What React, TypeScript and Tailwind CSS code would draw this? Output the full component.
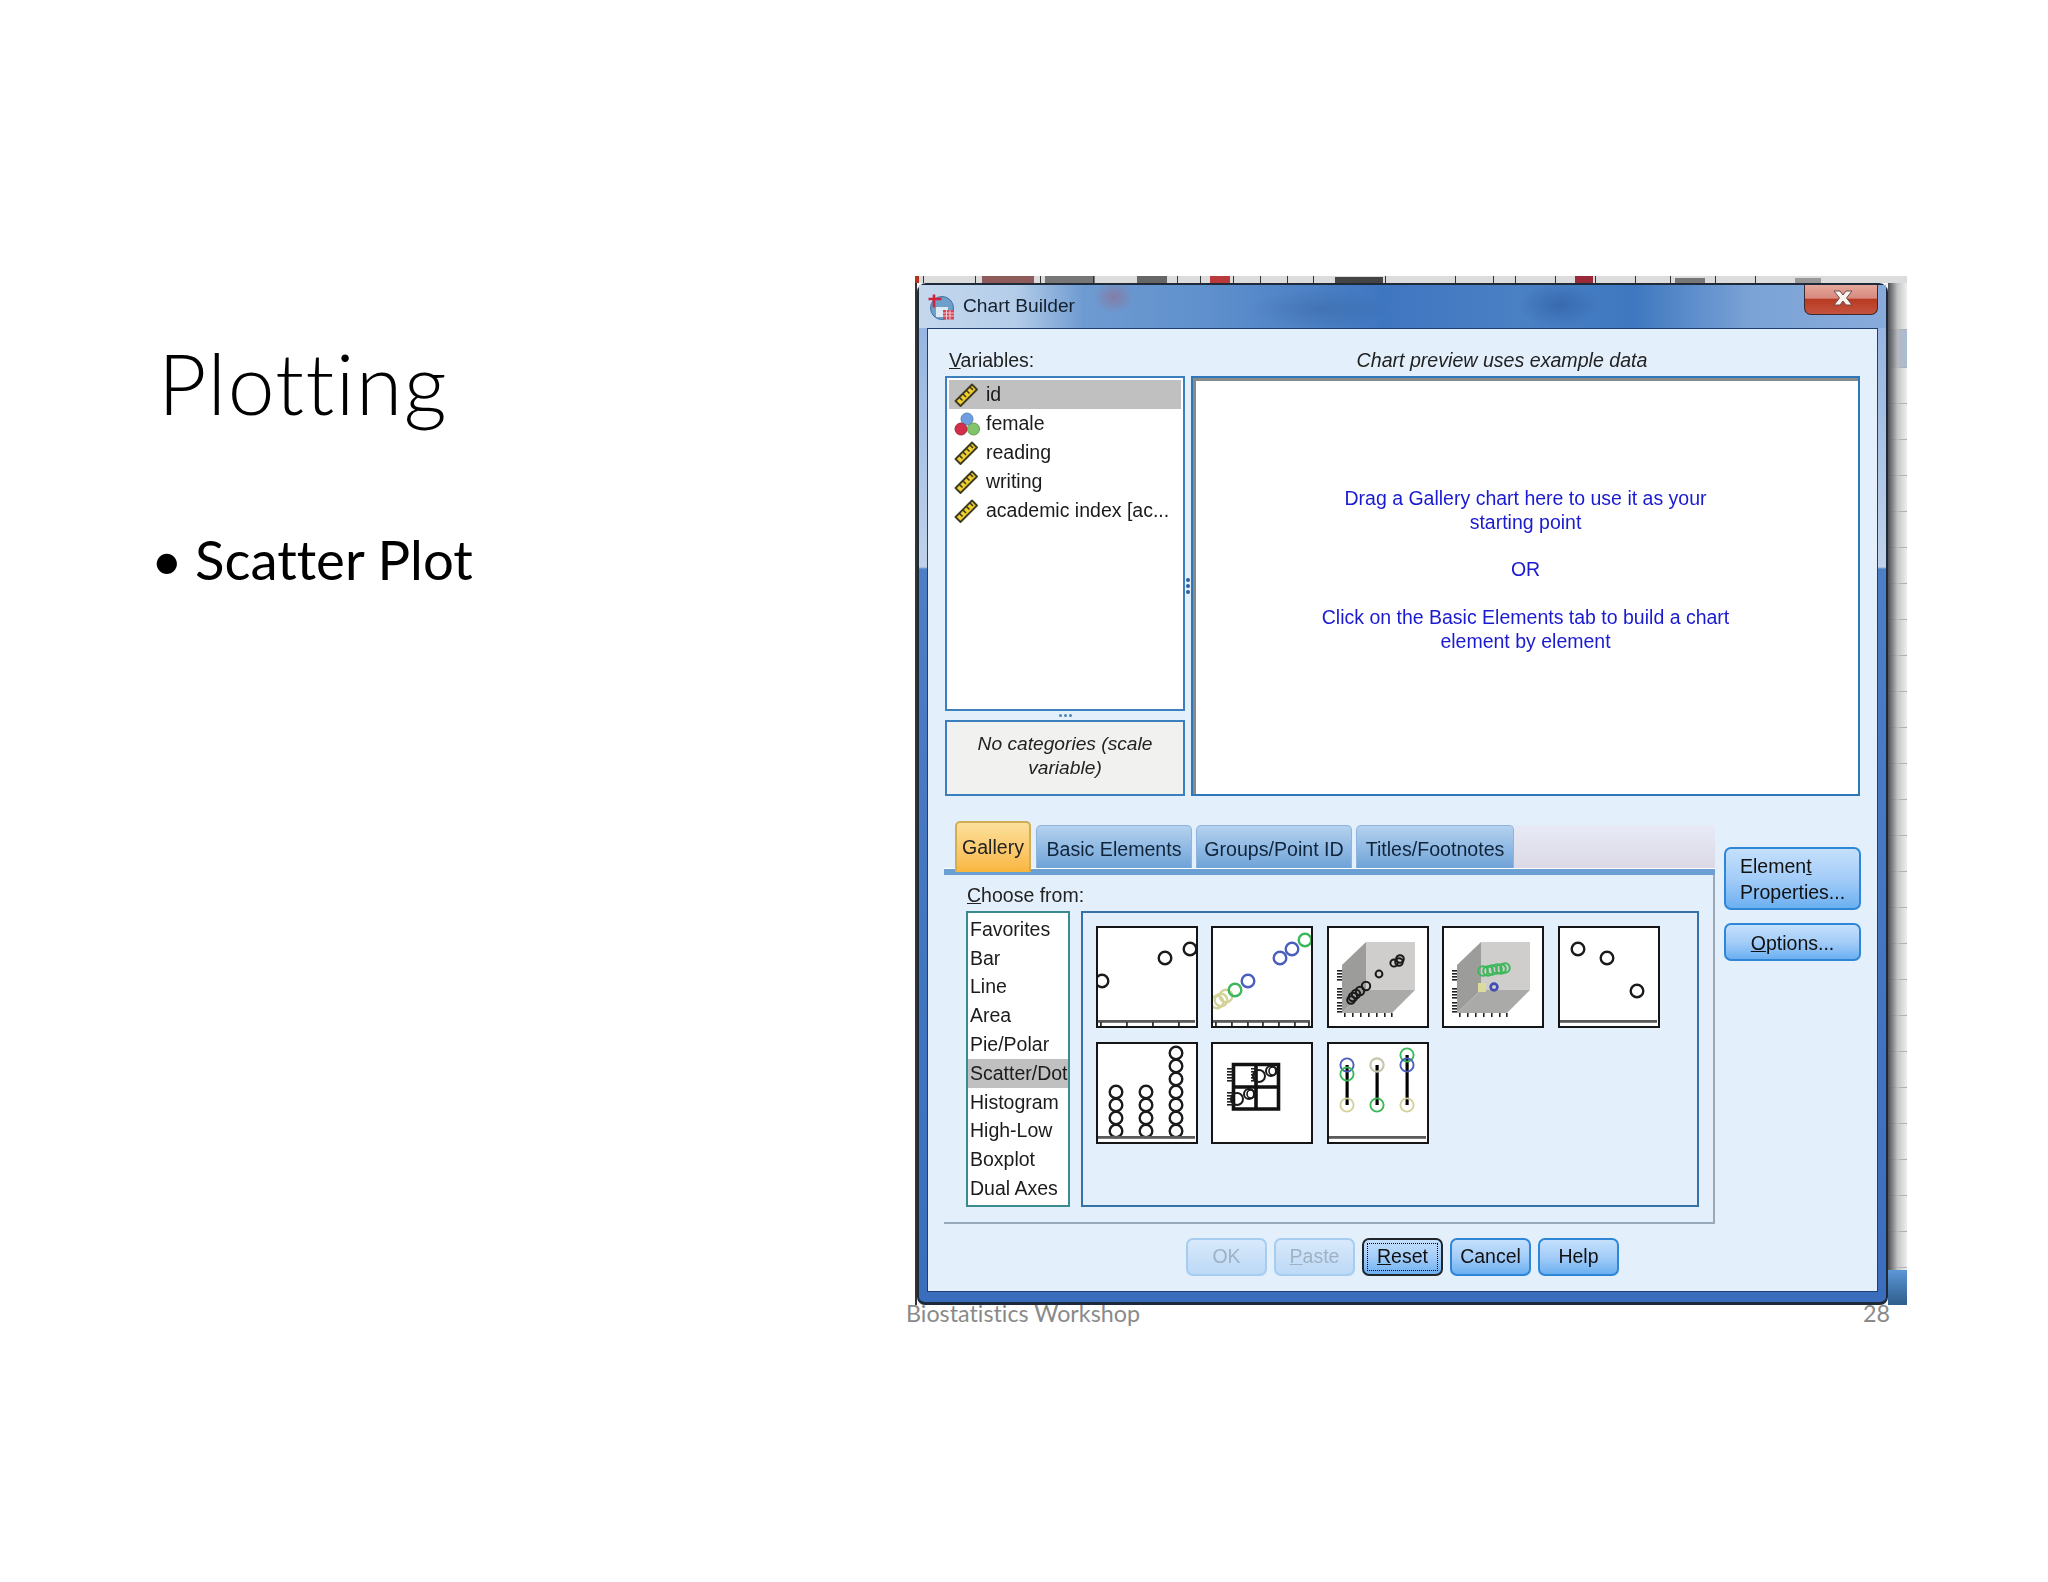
import type { ReactNode } from 'react';

const variables = [
  { name: 'id', kind: 'scale', selected: true },
  { name: 'female', kind: 'nominal' },
  { name: 'reading', kind: 'scale' },
  { name: 'writing', kind: 'scale' },
  { name: 'academic index [ac...', kind: 'scale' },
];

const categories = ['Favorites', 'Bar', 'Line', 'Area', 'Pie/Polar', 'Scatter/Dot', 'Histogram', 'High-Low', 'Boxplot', 'Dual Axes'];

const INK = '#1a1a1a';
const GREEN = '#3cb85a';
const BLUE = '#4a5fbd';
const KHAKI = '#d3d29b';

function Ruler() {
  return (
    <svg viewBox="0 0 24 24" className="w-[24px] h-[24px]">
      <path d="M1.5 18 L18 1.5 L23 6.5 L6.5 23 Z" fill="#f0cf2a" stroke="#3d3a22" strokeWidth="1.8" strokeLinejoin="round" />
      <path d="M5.5 14.5 L8.5 17.5 M9 11 L12 14 M12.5 7.5 L15.5 10.5 M16 4 L19 7" stroke="#3d3a22" strokeWidth="1.6" />
    </svg>
  );
}

function Balls() {
  return (
    <svg viewBox="0 0 26 24" className="w-[26px] h-[24px]">
      <circle cx="13" cy="7" r="6" fill="#6f9ee0" stroke="#5a83bf" />
      <circle cx="7" cy="17" r="6" fill="#d2304a" stroke="#a82538" />
      <circle cx="19.5" cy="17" r="6" fill="#82c46c" stroke="#639c52" />
    </svg>
  );
}

function AppIcon() {
  return (
    <svg viewBox="0 0 27 26" className="w-[27px] h-[26px]">
      <circle cx="14" cy="14" r="11.5" fill="#6d9fcb" stroke="#42719e" />
      <path d="M8 13h12v10H8z" fill="#dbe9f4" />
      <path d="M6 0.5v13M0.5 5h13" stroke="#d3203c" strokeWidth="2.6" />
      <path d="M15 16h11v9.5H15z" fill="#d3445a" />
      <path d="M15 19h11M15 22h11M18.5 16v9.5M22 16v9.5" stroke="#f6d8dc" strokeWidth="0.9" />
    </svg>
  );
}

function CloseGlyph() {
  return (
    <svg viewBox="0 0 20 16" className="w-[20px] h-[16px]">
      <path d="M1 1H7L10 5L13 1H19L13.5 8L19 15H13L10 11L7 15H1L6.5 8Z" fill="#f6f3f0" stroke="#6e4a46" strokeWidth="1" strokeLinejoin="round" />
    </svg>
  );
}

function Ring({ x, y, c = INK, r = 6.3, w = 2.4 }: { x: number; y: number; c?: string; r?: number; w?: number }) {
  return <circle cx={x} cy={y} r={r} fill="none" stroke={c} strokeWidth={w} />;
}

function Axis({ ticks = [] as number[] }) {
  return (
    <>
      <rect x="2" y="94" width="97" height="2.8" fill="#5a5a5a" />
      {ticks.map((t) => (
        <rect key={t} x={t} y="96" width="1.8" height="4" fill="#333" />
      ))}
    </>
  );
}

function Cube({ children }: { children: ReactNode }) {
  const ticks = [44, 47, 50, 53, 62, 65, 68, 71, 76, 79, 82, 85];
  return (
    <>
      <path d="M39 16H88V64H39Z" fill="#cfcecc" />
      <path d="M15 39L39 16V64L15 87Z" fill="#9c9c9a" />
      <path d="M15 87L39 64H88L65 87Z" fill="#aaaaa8" />
      {ticks.map((y) => (
        <rect key={y} x="10" y={y} width="5" height="1.6" fill="#222" />
      ))}
      {[17, 25, 33, 41, 49, 57, 64].map((x) => (
        <rect key={x} x={x} y="87" width="1.6" height="4" fill="#222" />
      ))}
      {children}
    </>
  );
}

const thumbs: ReactNode[] = [
  <>
    <Ring x={6} y={55} />
    <Ring x={69} y={32} />
    <Ring x={94} y={23} />
    <Axis ticks={[4, 30, 56, 82]} />
  </>,
  <>
    <Ring x={6} y={76} c={KHAKI} />
    <Ring x={10} y={74} c={KHAKI} />
    <Ring x={15} y={70} c={KHAKI} />
    <Ring x={24} y={64} c={GREEN} />
    <Ring x={37} y={55} c={BLUE} />
    <Ring x={69} y={32} c={BLUE} />
    <Ring x={81} y={23} c={BLUE} />
    <Ring x={94} y={14} c={GREEN} />
    <Axis ticks={[4, 20, 36, 51, 67, 83, 97]} />
  </>,
  <Cube>
    <Ring x={73} y={33} r={3.8} w={2} />
    <Ring x={72} y={36} r={3.8} w={2} />
    <Ring x={67} y={37} r={3.6} w={2} />
    <Ring x={52} y={48} r={3.4} w={2} />
    <Ring x={39} y={60} r={4.2} w={2} />
    <Ring x={33} y={65} r={4.2} w={2} />
    <Ring x={29} y={68} r={4.2} w={2} />
    <Ring x={26} y={71} r={4.2} w={2} />
    <Ring x={24} y={74} r={3.8} w={2} />
  </Cube>,
  <Cube>
    <Ring x={41} y={45} r={4.8} c={GREEN} w={2} />
    <Ring x={46} y={45} r={4.8} c={GREEN} w={2} />
    <Ring x={50} y={44} r={4.8} c={GREEN} w={2} />
    <Ring x={55} y={43} r={4.8} c={GREEN} w={2} />
    <Ring x={59} y={43} r={4.8} c={GREEN} w={2} />
    <Ring x={63} y={42} r={4.8} c={GREEN} w={2} />
    <rect x="36" y="57" width="8" height="9" fill="#dcdb9e" />
    <Ring x={52} y={61} r={3.4} c="#3f4db5" w={2.6} />
  </Cube>,
  <>
    <Ring x={20} y={23} />
    <Ring x={49} y={32} />
    <Ring x={79} y={65} />
    <Axis />
  </>,
  <>
    {[89, 76, 63, 50].map((y) => (
      <Ring key={`a${y}`} x={20} y={y} />
    ))}
    {[89, 76, 63, 50].map((y) => (
      <Ring key={`b${y}`} x={50} y={y} />
    ))}
    {[89, 76, 63, 50, 37, 24, 11].map((y) => (
      <Ring key={`c${y}`} x={80} y={y} />
    ))}
    <Axis />
  </>,
  <>
    <path d="M22.5 22.5H67.5V67H22.5Z M45 22.5V67 M22.5 45H67.5" fill="#fff" stroke="#111" strokeWidth="3.6" />
    {[26, 29, 32, 35, 38, 50, 53, 56, 59, 62].map((y) => (
      <rect key={y} x="16" y={y} width="6" height="1.6" fill="#222" />
    ))}
    {[26, 29, 32, 35, 38].map((y) => (
      <rect key={`m${y}`} x="40" y={y} width="5" height="1.6" fill="#222" />
    ))}
    <Ring x={48} y={34} r={6} w={2} />
    <Ring x={60} y={29} r={5} w={2} />
    <Ring x={62} y={29} r={4} w={1.6} />
    <Ring x={26} y={57} r={6} w={2} />
    <Ring x={38} y={52} r={5} w={2} />
    <Ring x={40} y={52} r={4} w={1.6} />
  </>,
  <>
    <rect x="18" y="23" width="4" height="40" fill="#888" />
    <rect x="19" y="23" width="2.4" height="40" fill="#000" />
    <rect x="48.5" y="23" width="3.2" height="40" fill="#000" />
    <rect x="78" y="13" width="4" height="50" fill="#888" />
    <rect x="79" y="13" width="2.4" height="50" fill="#000" />
    <Ring x={20} y={23} r={6.6} c={BLUE} w={1.9} />
    <Ring x={20} y={32} r={6.6} c={GREEN} w={1.9} />
    <Ring x={20} y={63} r={6.6} c={KHAKI} w={1.9} />
    <Ring x={50} y={23} r={6.6} c="#c8c6ae" w={2.2} />
    <Ring x={50} y={63} r={6.6} c={GREEN} w={1.9} />
    <Ring x={80} y={13} r={6.6} c={GREEN} w={1.9} />
    <Ring x={80} y={23} r={6.6} c={BLUE} w={1.9} />
    <Ring x={80} y={63} r={6.6} c={KHAKI} w={1.9} />
    <Axis />
  </>,
];

function Thumb({ children }: { children: ReactNode }) {
  return (
    <div className="w-[102px] h-[102px] bg-white border-2 border-[#151515]">
      <svg viewBox="2 2 98 98" className="w-full h-full block">
        {children}
      </svg>
    </div>
  );
}

function Tab({ label, w }: { label: string; w: string }) {
  return (
    <div className={`${w} h-[43px] flex items-center justify-center pt-[6px] rounded-t-[5px] border-t border-x border-[#8fb4dc] bg-gradient-to-b from-[#b4d2ef] to-[#6fa3d8] text-[19.6px] text-[#10243a]`}>
      {label}
    </div>
  );
}

const blueBtn = 'rounded-[7px] border-2 border-[#2f86d6] bg-gradient-to-b from-[#c4e0fc] via-[#a4cdf8] to-[#6bb0f1] text-[19.5px] text-[#111]';
const offBtn = 'rounded-[7px] border-2 border-[#a6cdef] bg-gradient-to-b from-[#d8e9fb] to-[#bcd9f6] text-[19.5px] text-[#9fb2c4]';

function Chrome() {
  return (
    <div className="w-[971px] h-[1022px] flex flex-col rounded-t-[9px] rounded-b-[8px] border-t-2 border-x-2 border-b-[3px] border-[#1e2a3a] bg-[linear-gradient(180deg,#8fb0df_0px,#c0d2ea_282px,#4d7fc6_284px,#3a6dbc_100%)]">
      <div className="h-[43px] shrink-0 flex justify-between pl-[9px] pr-[8px] bg-[radial-gradient(ellipse_40px_22px_at_640px_20px,rgba(30,70,140,0.35),transparent),radial-gradient(ellipse_70px_20px_at_400px_24px,rgba(40,80,130,0.25),transparent),radial-gradient(ellipse_20px_16px_at_195px_12px,rgba(190,60,70,0.3),transparent),linear-gradient(90deg,#c5d8ee_0%,#b4cde9_10%,#6e9bd1_17%,#5f90cd_30%,#3f76c0_48%,#4a80c4_62%,#3f78c0_74%,#7ba3d6_86%,#88abdb_100%)]">
        <div className="flex items-center gap-[8px]">
          <AppIcon />
          <span className="text-[19.2px] text-[#14202e]">Chart Builder</span>
        </div>
        <div className="w-[74px] h-[30px] flex items-center justify-center pl-[3px] pb-[3px] rounded-b-[7px] border-x border-b border-[#3b2a30] bg-[linear-gradient(180deg,#e6a79c_0%,#d78a7e_45%,#b93a22_50%,#c4533f_100%)]">
          <CloseGlyph />
        </div>
      </div>
      <div className="flex-1 px-[8px] pb-[7px]">
        <DialogBody />
      </div>
    </div>
  );
}

function DialogBody() {
  return (
    <div className="w-[951px] h-[964px] flex flex-col border border-[#1f3f73] bg-[#e3effb]">
      <div className="h-[47px] flex items-end pl-[21px] pb-[1px]">
        <span className="w-[241px] text-[19.5px] text-[#222]"><u>V</u>ariables:</span>
        <span className="w-[624px] text-center italic text-[19.6px] text-[#222]">Chart preview uses example data</span>
      </div>

      <div className="flex pl-[17px]">
        <div className="w-[240px] h-[420px] flex flex-col">
          <div className="h-[335px] border-2 border-[#3b7fbd] bg-white pt-[2px] px-[2px]">
            {variables.map((v) => (
              <div key={v.name} className={`h-[29px] flex items-center pl-[5px] text-[19.5px] text-[#1b1b1b] ${v.selected ? 'bg-[#c0c0c0]' : ''}`}>
                <span className="w-[32px] shrink-0 flex">{v.kind === 'scale' ? <Ruler /> : <Balls />}</span>
                <span>{v.name}</span>
              </div>
            ))}
          </div>
          <div className="h-[9px] flex items-center justify-center gap-[2px]">
            <i className="w-[3px] h-[3px] rounded-full bg-[#4c82b8]" />
            <i className="w-[3px] h-[3px] rounded-full bg-[#4c82b8]" />
            <i className="w-[3px] h-[3px] rounded-full bg-[#4c82b8]" />
          </div>
          <div className="h-[76px] flex items-center justify-center pb-[5px] text-center italic leading-[24px] border-2 border-[#3b7fbd] bg-[#f1f1ef] text-[19.2px] text-[#222]">
            <span>No categories (scale<br />variable)</span>
          </div>
        </div>
        <div className="w-[6px] h-[420px] flex flex-col items-center justify-center gap-[2px]">
          <i className="w-[4px] h-[4px] rounded-full bg-[#2f5f9c]" />
          <i className="w-[4px] h-[4px] rounded-full bg-[#2f5f9c]" />
          <i className="w-[4px] h-[4px] rounded-full bg-[#2f5f9c]" />
        </div>
        <div className="w-[669px] h-[420px] border-2 border-[#2f78b8] bg-white flex flex-col">
          <div className="flex-1 border-t-[3px] border-l-[3px] border-[#8a8a8a] pt-[105px] pr-[3px] text-center text-[19.5px] leading-[24px] text-[#1a1ad0]">
            <p>Drag a Gallery chart here to use it as your<br />starting point</p>
            <p className="mt-[23px]">OR</p>
            <p className="mt-[24px]">Click on the Basic Elements tab to build a chart<br />element by element</p>
          </div>
        </div>
      </div>

      <div className="flex pl-[16px] mt-[25px]">
        <div className="w-[771px] flex flex-col">
          <div className="h-[47px] flex items-end pl-[11px]">
            <div className="w-[76px] h-[51px] relative z-10 -mb-[4px] flex items-center justify-center rounded-t-[5px] border-2 border-b-0 border-[#cfae55] bg-gradient-to-b from-[#fce09a] to-[#f9b63e] text-[19.5px] text-[#222]">Gallery</div>
            <div className="ml-[5px] flex gap-[4px]">
              <Tab label="Basic Elements" w="w-[156px]" />
              <Tab label="Groups/Point ID" w="w-[156px]" />
              <Tab label="Titles/Footnotes" w="w-[158px]" />
            </div>
            <div className="flex-1 h-[43px] bg-gradient-to-b from-[#e7eaf6] to-[#dcd9e6]" />
          </div>
          <div className="h-[7px] border-t border-white bg-[#6c9fd3]" />
          <div className="h-[349px] border-r-2 border-b-2 border-[#9aa9b8] pl-[22px]">
            <div className="h-[36px] flex items-center pt-[6px] pl-[1px] text-[19.5px] text-[#222]">
              <span><u>C</u>hoose from:</span>
            </div>
            <div className="flex gap-[11px]">
              <div className="w-[104px] h-[296px] border-2 border-[#3a8a8f] bg-white pt-[2px]">
                {categories.map((c) => (
                  <div key={c} className={`h-[28.8px] flex items-center pl-[2px] text-[19.5px] text-[#1b1b1b] whitespace-nowrap ${c === 'Scatter/Dot' ? 'bg-[#c0c0c0]' : ''}`}>
                    {c}
                  </div>
                ))}
              </div>
              <div className="w-[618px] h-[296px] border-2 border-[#3671a8] pl-[12.5px] pt-[13px]">
                <div className="flex flex-wrap gap-x-[13.5px] gap-y-[14px]">
                  {thumbs.map((t, i) => (
                    <Thumb key={i}>{t}</Thumb>
                  ))}
                </div>
              </div>
            </div>
          </div>
        </div>
        <div className="ml-[9px] mt-[26px] w-[137px] flex flex-col gap-[13px]">
          <div className={`${blueBtn} h-[63px] pl-[14px] pt-[4px] leading-[26px]`}>
            Elemen<u>t</u><br />Properties...
          </div>
          <div className={`${blueBtn} h-[38px] pt-[3px] flex items-center justify-center`}>
            <span><u>O</u>ptions...</span>
          </div>
        </div>
      </div>

      <div className="flex pl-[258px] mt-[14px] gap-[7px]">
        <div className={`${offBtn} w-[81px] h-[38px] flex items-center justify-center`}>OK</div>
        <div className={`${offBtn} w-[81px] h-[38px] flex items-center justify-center`}><span><u>P</u>aste</span></div>
        <div className="w-[81px] h-[38px] p-[3px] rounded-[7px] border-2 border-[#22272e] bg-gradient-to-b from-[#c4e0fc] via-[#a4cdf8] to-[#6bb0f1] text-[19.5px] text-[#111]">
          <div className="w-full h-full flex items-center justify-center border border-dotted border-black"><span><u>R</u>eset</span></div>
        </div>
        <div className={`${blueBtn} w-[81px] h-[38px] flex items-center justify-center`}>Cancel</div>
        <div className={`${blueBtn} w-[81px] h-[38px] flex items-center justify-center`}>Help</div>
      </div>
    </div>
  );
}

function RightEdge() {
  const bands = ['h-[47px]', 'h-[38px] bg-[#a8bcd4]', ...Array.from({ length: 25 }, () => 'h-[36px]')];
  return (
    <div className="relative w-[19px] flex flex-col overflow-hidden bg-[#eeeff1]">
      {bands.map((b, i) => (
        <div key={i} className={`${b} shrink-0 border-b border-[#a9adb3]`} />
      ))}
      <div className="absolute inset-0 bg-gradient-to-r from-[#4d5054] via-[#b9b9b9]/80 to-transparent" />
      <div className="absolute bottom-0 left-0 right-0 h-[35px] bg-gradient-to-b from-[#5c97d6] to-[#2f5e8c]" />
    </div>
  );
}

function TopStrip() {
  const ticks = [8, 60, 125, 178, 262, 285, 318, 345, 372, 398, 470, 540, 578, 600, 640, 680, 720, 755, 800, 840];
  return (
    <svg viewBox="0 0 992 7" className="w-[992px] h-[7px] block shrink-0">
      <rect width="992" height="7" fill="#dcdcdc" />
      <rect width="4" height="7" fill="#b5331c" />
      <rect x="67" width="52" height="7" fill="#7a3a3a" opacity="0.8" />
      <rect x="130" width="50" height="7" fill="#777" />
      <rect x="222" width="30" height="7" fill="#666" />
      <rect x="295" width="20" height="7" fill="#b83a3a" />
      <rect x="420" y="1" width="48" height="6" fill="#444" />
      <rect x="660" width="18" height="7" fill="#9a2a3a" />
      <rect x="760" y="2" width="30" height="5" fill="#777" />
      <rect x="880" y="2" width="26" height="5" fill="#999" />
      {ticks.map((x) => (
        <rect key={x} x={x} width="1" height="7" fill="#333" />
      ))}
    </svg>
  );
}

export default function App() {
  return (
    <main className="w-[2048px] h-[1582px] flex bg-white overflow-hidden">
      <section className="w-[915px] pt-[333px] pl-[158px] [font-family:Lato,sans-serif] [font-variant-ligatures:none] text-black">
        <h1 className="text-[84px] leading-[100px] font-light tracking-[1.5px]">Plotting</h1>
        <div className="mt-[94px] flex items-center text-[54.5px] leading-[64px]">
          <span className="w-[44px] -ml-[7px]">•</span>
          <span>Scatter Plot</span>
        </div>
      </section>
      <section className="w-[992px] pt-[276px] [font-family:'Liberation_Sans',sans-serif]">
        <div className="h-[1029px] flex flex-col bg-[#f4f5f7] blur-[0.4px]">
          <TopStrip />
          <div className="flex flex-1">
            <div className="w-[2px] bg-[#333]" />
            <Chrome />
            <RightEdge />
          </div>
        </div>
        <div className="-ml-[9px] w-[984px] h-[22px] flex justify-between [font-family:Lato,sans-serif] [font-variant-ligatures:none] text-[23.3px] leading-[16px] text-[#8a8a8a]">
          <span>Biostatistics Workshop</span>
          <span>28</span>
        </div>
      </section>
    </main>
  );
}
